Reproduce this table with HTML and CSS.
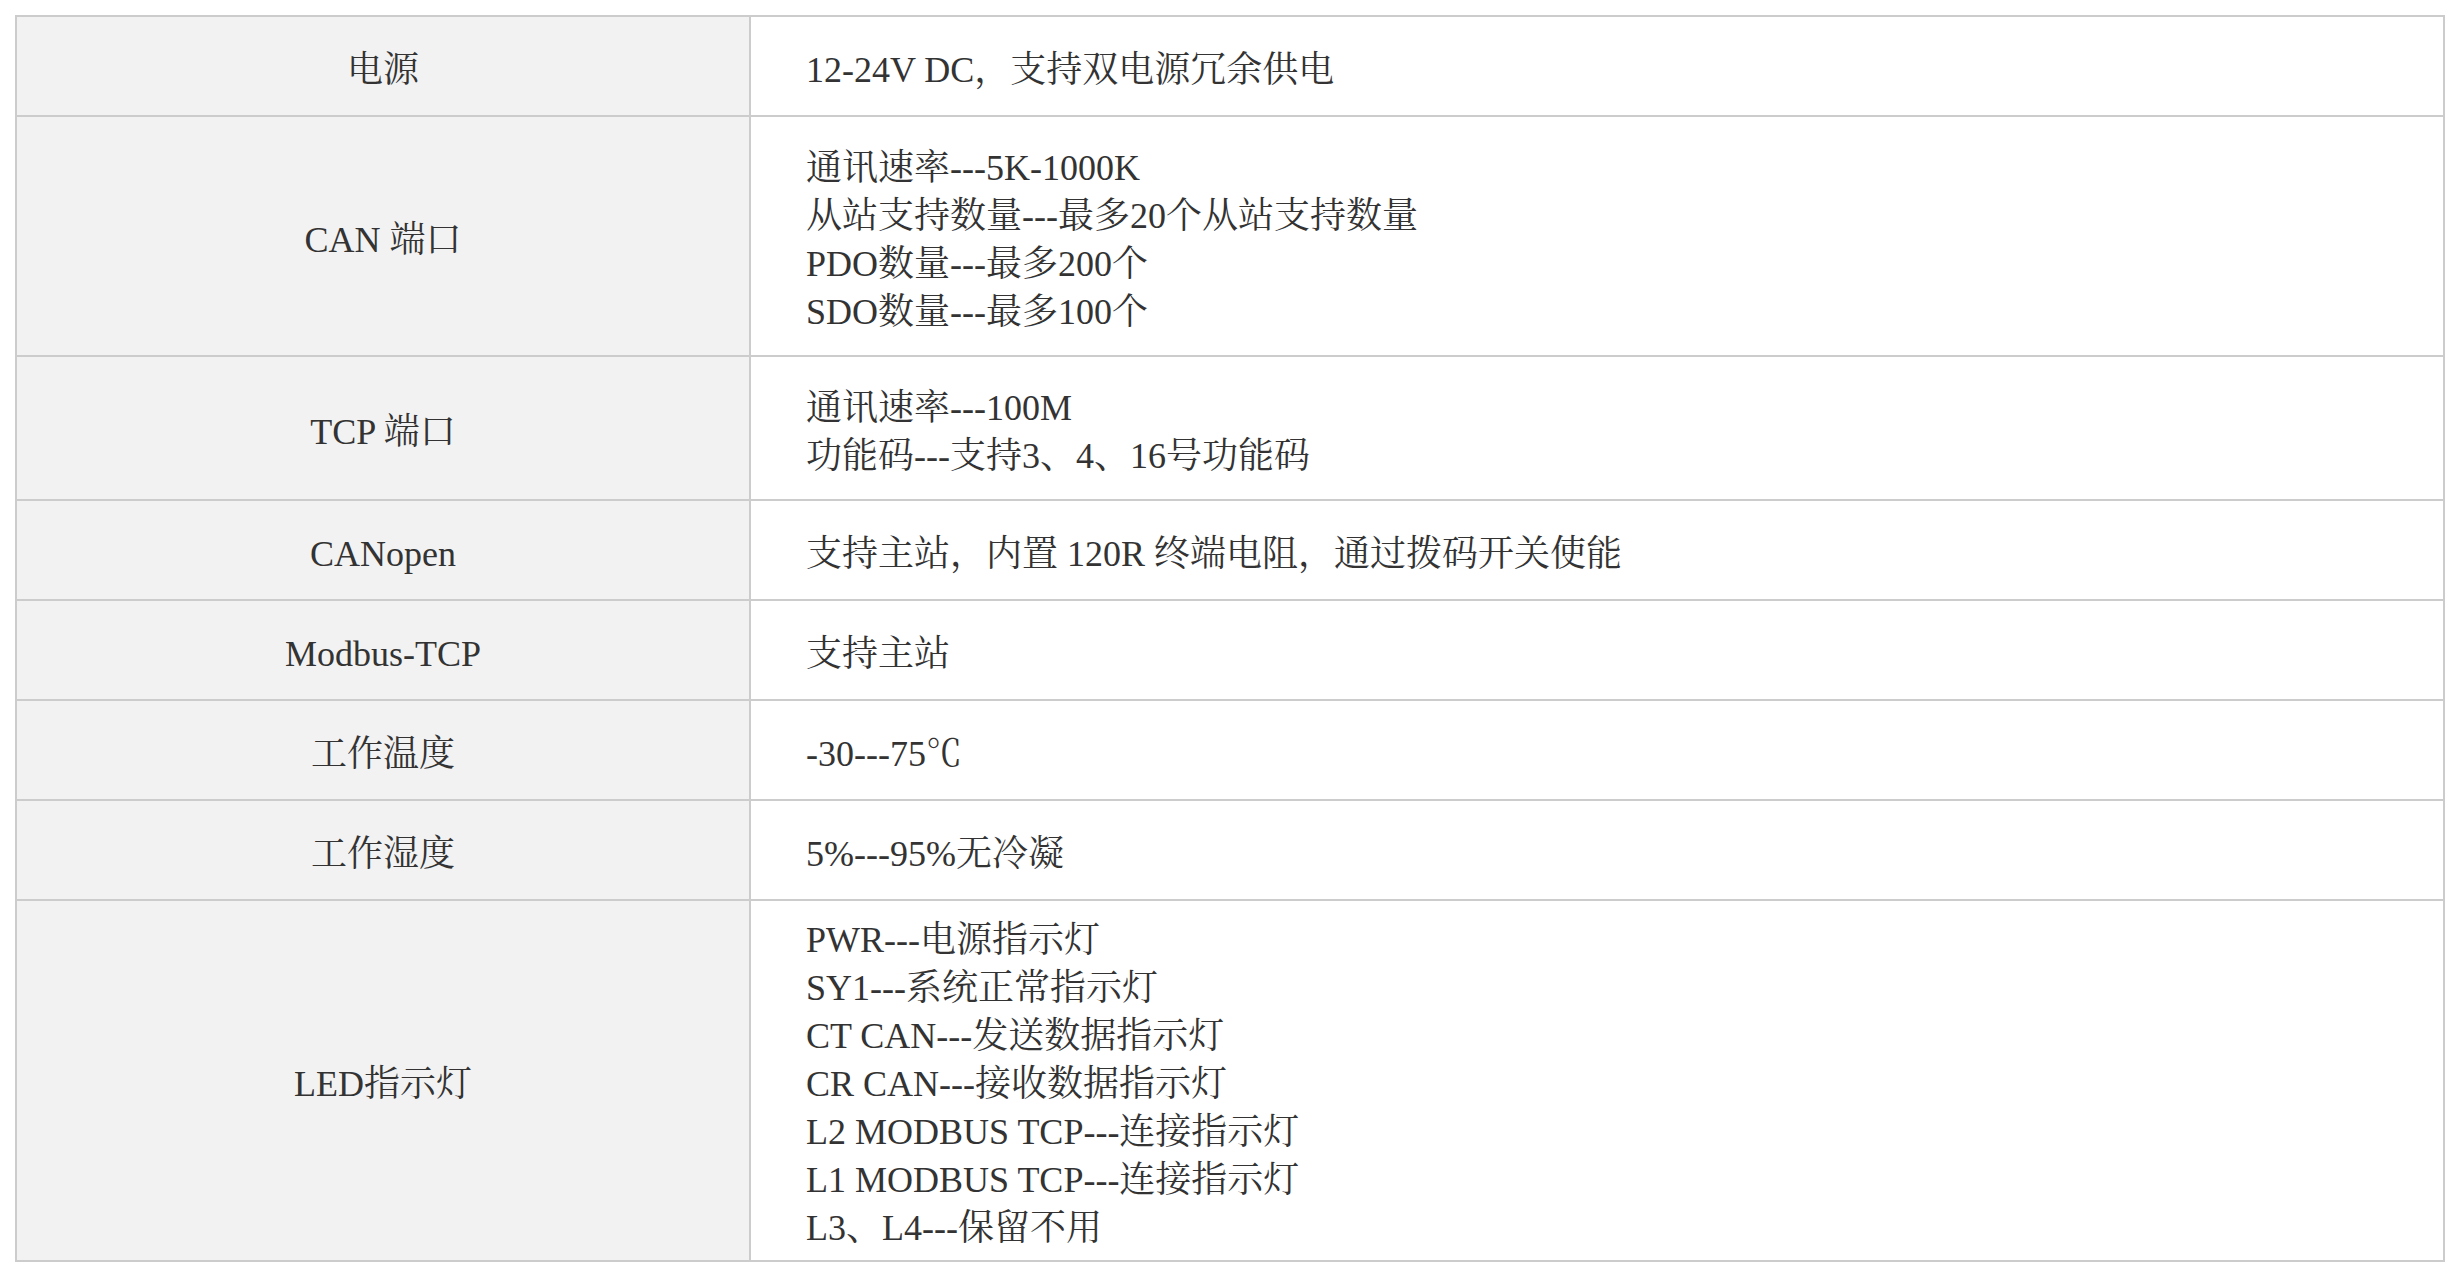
FILE: index.html
```html
<!DOCTYPE html>
<html lang="zh-CN">
<head>
<meta charset="utf-8">
<title>参数</title>
<link rel="stylesheet" href="styles.css">
</head>
<body>
<table class="spec">
  <tbody>
    <tr>
      <td class="label">电源</td>
      <td class="value">12-24V DC，支持双电源冗余供电</td>
    </tr>
    <tr>
      <td class="label">CAN 端口</td>
      <td class="value">通讯速率---5K-1000K<br>从站支持数量---最多20个从站支持数量<br>PDO数量---最多200个<br>SDO数量---最多100个</td>
    </tr>
    <tr>
      <td class="label">TCP 端口</td>
      <td class="value">通讯速率---100M<br>功能码---支持3、4、16号功能码</td>
    </tr>
    <tr>
      <td class="label">CANopen</td>
      <td class="value">支持主站，内置 120R 终端电阻，通过拨码开关使能</td>
    </tr>
    <tr>
      <td class="label">Modbus-TCP</td>
      <td class="value">支持主站</td>
    </tr>
    <tr>
      <td class="label">工作温度</td>
      <td class="value">-30---75℃</td>
    </tr>
    <tr>
      <td class="label">工作湿度</td>
      <td class="value">5%---95%无冷凝</td>
    </tr>
    <tr class="tight">
      <td class="label">LED指示灯</td>
      <td class="value">PWR---电源指示灯<br>SY1---系统正常指示灯<br>CT CAN---发送数据指示灯<br>CR CAN---接收数据指示灯<br>L2 MODBUS TCP---连接指示灯<br>L1 MODBUS TCP---连接指示灯<br>L3、L4---保留不用</td>
    </tr>
  </tbody>
</table>
</body>
</html>
```
FILE: styles.css
```css
html, body {
  background: #ffffff;
}
body {
  margin: 15px;
}
.spec {
  width: 2430px;
  table-layout: fixed;
  border-collapse: separate;
  border-spacing: 0;
  border-top: 2px solid #cccccc;
  border-left: 2px solid #cccccc;
  box-sizing: border-box;
  font-family: "Liberation Serif", "Noto Serif CJK SC", "Noto Sans CJK SC", serif;
  font-size: 36px;
  line-height: 48px;
  color: #333333;
}
.spec tr {
  height: 100px;
}
.spec td {
  box-sizing: border-box;
  border-right: 2px solid #cccccc;
  border-bottom: 2px solid #cccccc;
  padding: 27px 0 19px 0;
  vertical-align: middle;
}
.spec .label {
  width: 734px;
  background: #f2f2f2;
  text-align: center;
}
.spec .value {
  padding-left: 55px;
  text-align: left;
  background: #ffffff;
}
.spec .tight td {
  padding-top: 15px;
  padding-bottom: 8px;
}
```
